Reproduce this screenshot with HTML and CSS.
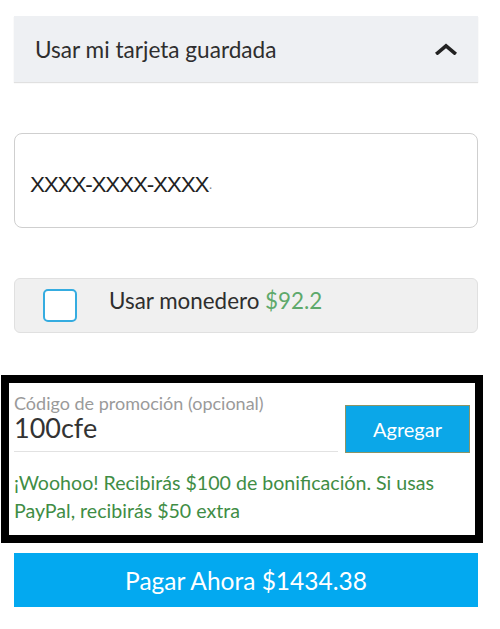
FILE: index.html
```html
<!DOCTYPE html>
<html lang="es">
<head>
<meta charset="utf-8">
<link rel="stylesheet" href="styles.css">
</head>
<body>
<div class="page">
  <div class="accordion">
    <span class="accordion-title">Usar mi tarjeta guardada</span>
    <svg class="chevron" width="22" height="12" viewBox="0 0 22 12"><path d="M2.5 10 L11 2.8 L19.5 10" fill="none" stroke="#222" stroke-width="3.6" stroke-linecap="square"/></svg>
  </div>

  <div class="card-input">
    <span class="card-number">XXXX-XXXX-XXXX<span class="dot">·</span></span>
  </div>

  <div class="wallet">
    <span class="checkbox"></span>
    <span class="wallet-label">Usar monedero <span class="wallet-amount">$92.2</span></span>
  </div>

  <div class="promo">
    <div class="promo-row">
      <div class="promo-field">
        <div class="promo-label">Código de promoción (opcional)</div>
        <div class="promo-value">100cfe</div>
      </div>
      <button class="promo-btn">Agregar</button>
    </div>
    <p class="promo-msg">¡Woohoo! Recibirás $100 de bonificación. Si usas PayPal, recibirás $50 extra</p>
  </div>

  <button class="pay-btn">Pagar Ahora $1434.38</button>
</div>
</body>
</html>
```

FILE: styles.css
```css
* { box-sizing: border-box; }
html, body { margin: 0; padding: 0; background: #fff; }
body { font-family: Lato, "Noto Sans", sans-serif; color: #333; width: 500px; overflow: hidden; }

.page { padding: 16px 22px 0 14px; }

.accordion {
  height: 66px;
  background: #eef0f3;
  display: flex;
  align-items: center;
  justify-content: space-between;
  padding: 0 21px 0 21px;
  box-shadow: 0 1px 1px rgba(0,0,0,0.12);
}
.accordion-title { font-size: 22.6px; color: #2e2e2e; }
.chevron { display: block; margin-top: -1px; }

.card-input {
  margin-top: 51px;
  height: 95px;
  border: 1.5px solid #cfcfcf;
  border-radius: 8px;
  display: flex;
  align-items: center;
  padding-left: 15px;
  padding-top: 8px;
}
.card-number {
  font-family: "Liberation Sans", Arial, sans-serif;
  font-size: 22.5px;
  letter-spacing: -1.2px;
  color: #222;
}
.card-number .dot { color: #888; letter-spacing: 0; font-size: 14px; }

.wallet {
  margin-top: 50px;
  height: 55px;
  background: #f0f0f0;
  border: 1px solid #e0e0e0;
  border-radius: 6px;
  display: flex;
  align-items: center;
  padding-left: 28px;
  gap: 32px;
}
.checkbox {
  width: 34px;
  height: 33px;
  border: 2px solid #35ace0;
  border-radius: 5px;
  background: #fff;
  margin-top: -1px;
}
.wallet-label { font-size: 22.4px; color: #2e2e2e; margin-top: -11px; }
.wallet-amount { color: #5ea96b; }

.promo {
  margin-top: 42px;
  margin-left: -13px;
  width: 482px;
  border: 8px solid #000;
  background: #fff;
  padding: 10px 5px 10px 5px;
}
.promo-row { display: flex; align-items: flex-end; gap: 7px; }
.promo-field { width: 324px; border-bottom: 1px solid #e2e2e2; padding-bottom: 8px; }
.promo-label { font-size: 18px; line-height: 20px; color: #9a9a9a; }
.promo-value { font-size: 27px; line-height: 30px; color: #333; }
.promo-btn {
  width: 125px;
  height: 48px;
  margin-bottom: -1px;
  background: #0ba7e8;
  border: 1.5px solid #8b9466;
  color: #fff;
  font-family: Lato, sans-serif;
  font-size: 20px;
  padding: 0;
}
.promo-msg {
  margin: 17px 0 0 0;
  font-size: 19.6px;
  line-height: 28px;
  color: #3f8d45;
}

.pay-btn {
  display: block;
  width: 464px;
  height: 54px;
  margin-top: 10px;
  background: #03a9f0;
  border: none;
  color: #fff;
  font-family: Lato, sans-serif;
  font-size: 24.5px;
  padding: 0;
}
```
